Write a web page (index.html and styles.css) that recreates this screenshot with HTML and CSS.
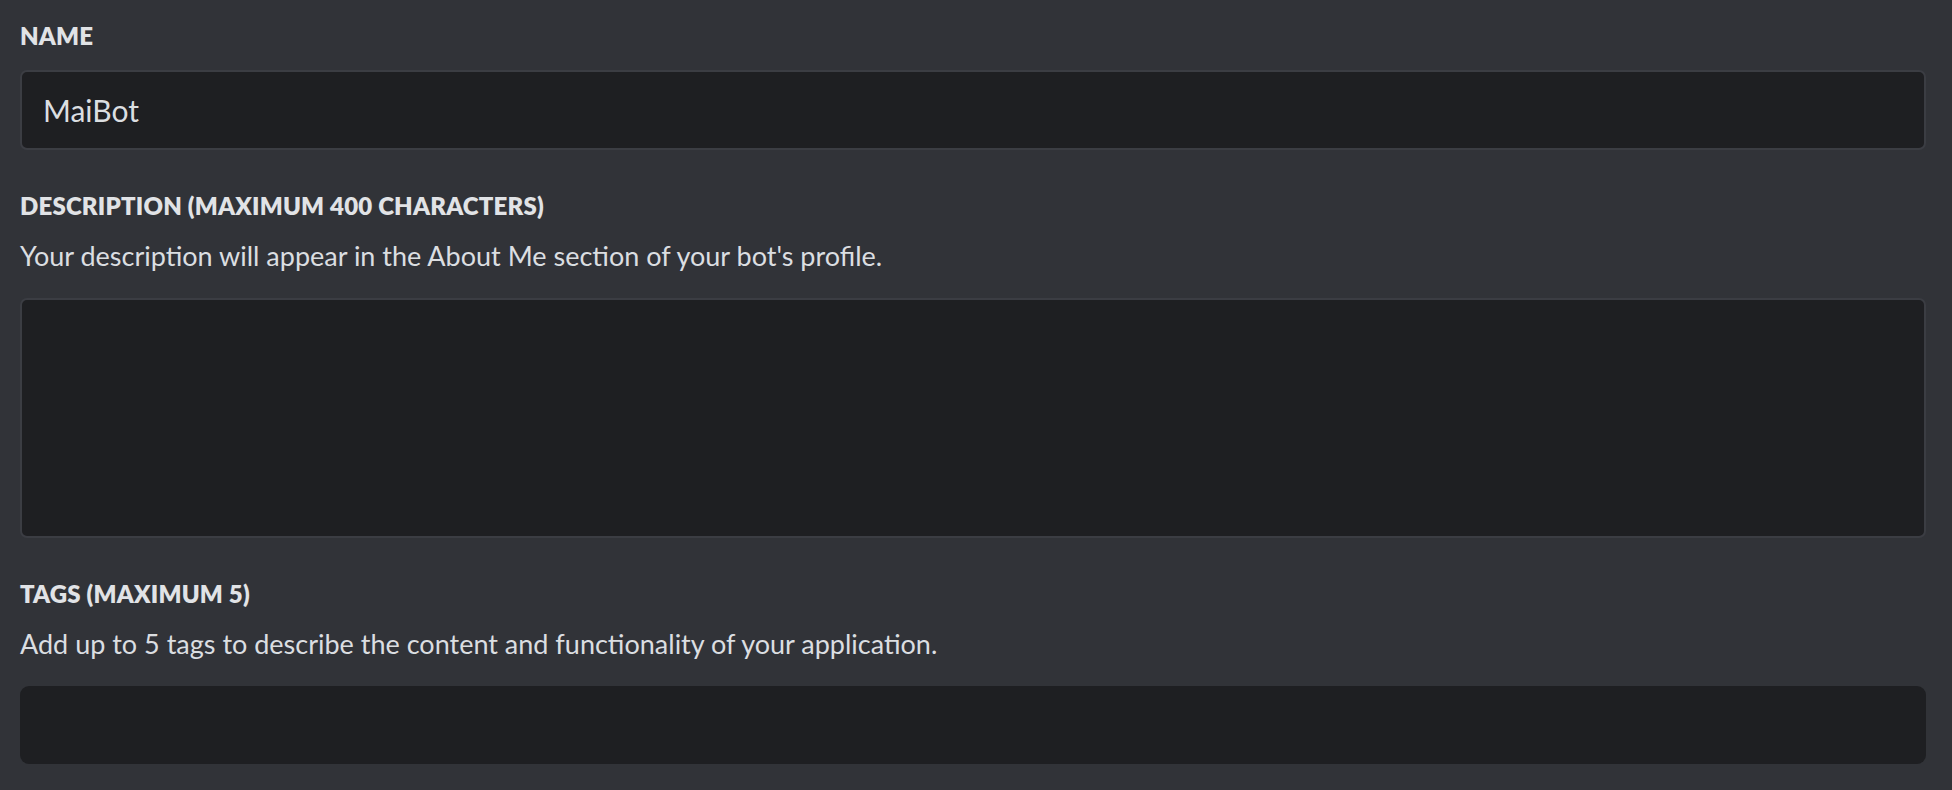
FILE: index.html
```html
<!DOCTYPE html>
<html lang="en">
<head>
<meta charset="utf-8">
<title>General Information</title>
<link rel="stylesheet" href="styles.css">
</head>
<body>
<main class="form">
  <section class="field">
    <h2 class="field-label">Name</h2>
    <div class="text-input">MaiBot</div>
  </section>
  <section class="field">
    <h2 class="field-label">Description (Maximum 400 Characters)</h2>
    <p class="field-help">Your description will appear in the About Me section of your bot's profile.</p>
    <div class="text-area"></div>
  </section>
  <section class="field">
    <h2 class="field-label">Tags (Maximum 5)</h2>
    <p class="field-help">Add up to 5 tags to describe the content and functionality of your application.</p>
    <div class="tag-input"></div>
  </section>
</main>
</body>
</html>
```
FILE: styles.css
```css
html, body {
  margin: 0;
  padding: 0;
  background: #313338;
  height: 100%;
  overflow: hidden;
}
body {
  font-family: Lato, "Noto Sans", sans-serif;
  color: #dbdee1;
}
.form {
  padding: 20px 26px 0 20px;
  display: flex;
  flex-direction: column;
  gap: 40px;
}
.field {
  display: flex;
  flex-direction: column;
}
.field-label {
  margin: 0 0 18px 0;
  font-size: 24px;
  line-height: 32px;
  font-weight: 800;
  text-transform: uppercase;
  letter-spacing: 0.2px;
  color: #e1e3e6;
}
.field-help {
  margin: -2px 0 24px 0;
  font-size: 27px;
  line-height: 36px;
  color: #dbdee1;
}
.text-input {
  box-sizing: border-box;
  height: 80px;
  background: #1e1f22;
  border: 2px solid #3b3d43;
  border-radius: 7px;
  padding: 0 21px;
  display: flex;
  align-items: center;
  font-size: 30px;
  color: #dbdee1;
}
.text-area {
  box-sizing: border-box;
  height: 240px;
  background: #1e1f22;
  border: 2px solid #3b3d43;
  border-radius: 7px;
}
.tag-input {
  height: 78px;
  background: #1e1f22;
  border-radius: 9px;
}
```
